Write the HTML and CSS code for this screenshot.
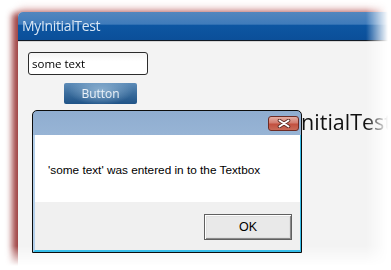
FILE: index.html
```html
<!DOCTYPE html>
<html>
<head>
<meta charset="utf-8">
<link rel="stylesheet" href="styles.css">
</head>
<body>
<div class="screen">
  <div class="frame">
    <div class="win">
      <div class="win-title">MyInitialTest</div>
      <div class="win-body">
        <div class="textbox">some text</div>
        <div class="btn">Button</div>
        <div class="big-label">MyInitialTest</div>
      </div>
    </div>
  </div>
  <div class="dialog">
    <div class="dlg-title">
      <div class="close">
        <svg width="14" height="9" viewBox="0 0 14 9">
          <path d="M2.5 1.5 L11.5 7.5 M11.5 1.5 L2.5 7.5" stroke="#5a2a24" stroke-width="3.6" stroke-linecap="round" fill="none"/>
          <path d="M2.5 1.5 L11.5 7.5 M11.5 1.5 L2.5 7.5" stroke="#ffffff" stroke-width="1.9" stroke-linecap="round" fill="none"/>
        </svg>
      </div>
    </div>
    <div class="dlg-content">
      <div class="dlg-body">'some text' was entered in to the Textbox</div>
      <div class="dlg-footer"><div class="ok">OK</div></div>
    </div>
  </div>
</div>
</body>
</html>
```
FILE: styles.css
```css
html, body {
  margin: 0;
  padding: 0;
  background: #ffffff;
}
.screen {
  position: relative;
  width: 391px;
  height: 270px;
  overflow: hidden;
  background: #ffffff;
}
.frame {
  width: 391px;
  height: 270px;
  box-sizing: border-box;
  padding: 12px 0 0 18px;
  -webkit-mask-image: linear-gradient(to right, #000 366px, transparent 388px), linear-gradient(to bottom, #000 246px, transparent 266px);
  -webkit-mask-composite: source-in;
  mask-image: linear-gradient(to right, #000 366px, transparent 388px), linear-gradient(to bottom, #000 246px, transparent 266px);
  mask-composite: intersect;
}
.win {
  width: 373px;
  height: 258px;
  display: flex;
  flex-direction: column;
  border-radius: 5px 5px 0 0;
  box-shadow: -7px 0 6px -1px rgba(140, 30, 30, 0.8), 0 -4px 7px rgba(190, 90, 90, 0.35);
}
.win-title {
  height: 28px;
  line-height: 28px;
  padding-left: 4px;
  border-radius: 5px 5px 0 0;
  border-bottom: 1px solid #121a24;
  background: linear-gradient(to bottom, #5286be 0, #3f7bbb 44%, #0d56a2 46%, #0b4f99 100%);
  color: #d9e6f4;
  font-family: "Open Sans", sans-serif;
  font-size: 14px;
  letter-spacing: -0.35px;
}
.win-body {
  flex: 1;
  background: #f3f3f3;
  border-top: 1px solid #d6d6d6;
  display: flex;
  flex-direction: column;
  align-items: flex-start;
}
.textbox {
  margin: 10px 0 0 10px;
  width: 120px;
  height: 23px;
  box-sizing: border-box;
  border: 1px solid #2c2c2c;
  border-radius: 3px;
  background: linear-gradient(to bottom, #f4f4f4, #ffffff 40%);
  padding-left: 3px;
  font-family: "Open Sans", sans-serif;
  font-size: 11.5px;
  line-height: 21px;
  color: #000;
}
.btn {
  margin: 8px 0 0 46px;
  width: 73px;
  height: 21px;
  box-sizing: border-box;
  border-radius: 2px;
  background: radial-gradient(ellipse 45% 70% at 50% 35%, rgba(150, 185, 215, 0.85), rgba(150, 185, 215, 0) 100%), linear-gradient(to bottom, #5d8cb8 0, #3a6c9c 50%, #1f5387 100%);
  color: #eaf1f8;
  font-family: "Open Sans", sans-serif;
  font-size: 12px;
  line-height: 21px;
  text-align: center;
}
.big-label {
  margin: 5px 0 0 247px;
  font-family: "Open Sans", sans-serif;
  font-size: 21.5px;
  line-height: 25px;
  color: #111111;
  white-space: nowrap;
}
.dialog {
  position: absolute;
  left: 32px;
  top: 110px;
  width: 270px;
  height: 143px;
  box-sizing: border-box;
  border: 1px solid #0c0c0c;
  border-radius: 5px 5px 0 0;
  background: linear-gradient(to bottom, #8fadd0, #bfd6ed);
  display: flex;
  flex-direction: column;
}
.dlg-title {
  position: relative;
  height: 24px;
  flex: none;
}
.close {
  position: absolute;
  right: 2px;
  top: 5px;
  width: 31px;
  height: 15px;
  box-sizing: border-box;
  border: 1px solid #6d2b24;
  border-radius: 3px;
  background: linear-gradient(to bottom, #e4aea4 0, #d27c6f 45%, #c2503f 55%, #c86a58 100%);
  display: flex;
  align-items: center;
  justify-content: center;
}
.dlg-content {
  flex: 1;
  display: flex;
  flex-direction: column;
  border-left: 2px solid #b3cfea;
  border-right: 1px solid #37bde8;
  border-bottom: 2px solid #37bde8;
}
.dlg-body {
  height: 67px;
  background: #ffffff;
  box-sizing: border-box;
  padding: 27px 0 0 13px;
  font-family: "Liberation Sans", Arial, sans-serif;
  font-size: 11.8px;
  line-height: 16px;
  color: #000;
  white-space: nowrap;
}
.dlg-footer {
  flex: 1;
  background: #f0f0f0;
  display: flex;
  justify-content: flex-end;
  align-items: flex-start;
  padding: 12px 8px 0 0;
}
.ok {
  width: 88px;
  height: 26px;
  box-sizing: border-box;
  border: 1px solid #606060;
  box-shadow: inset 1px 1px 0 #ffffff, inset -1px -1px 0 #8a8a8a, inset 0 0 0 2px #e0e0e0;
  background: #e9e9e9;
  font-family: "Liberation Sans", Arial, sans-serif;
  font-size: 12.5px;
  line-height: 24px;
  text-align: center;
  color: #000;
}
```
